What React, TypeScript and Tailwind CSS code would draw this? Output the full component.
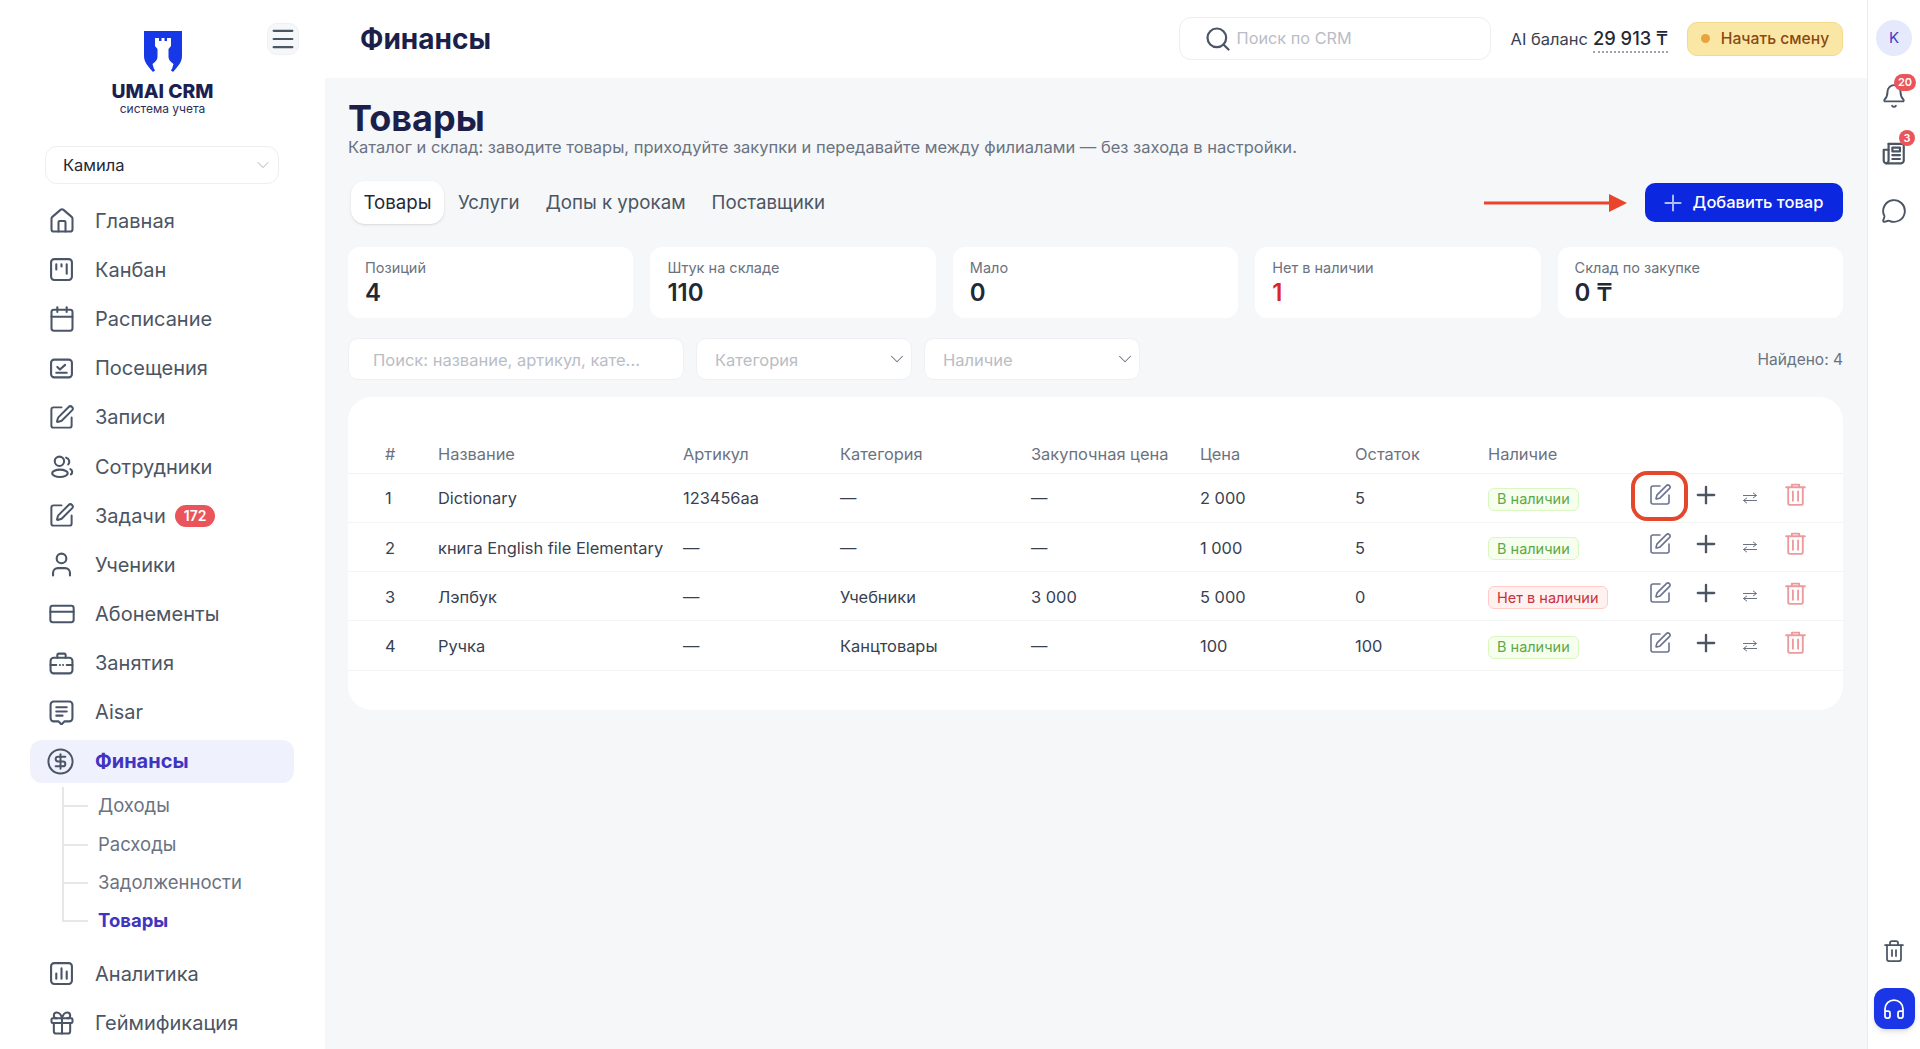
import React from "react";
import {
  House, Calendar, SquarePen, User, CreditCard, CircleDollarSign, Gift, Bell,
  MessageCircle, Trash2, Headphones, Search, ChevronDown, Plus, Menu,
} from "lucide-react";

type IconProps = { className?: string };

function Svg({ className, children }: { className?: string; children: React.ReactNode }) {
  return (
    <svg viewBox="0 0 24 24" fill="none" stroke="currentColor" strokeWidth="2" strokeLinecap="round" strokeLinejoin="round" className={className}>
      {children}
    </svg>
  );
}

const KanbanIcon = ({ className }: IconProps) => (
  <Svg className={className}><rect x="2" y="2" width="20" height="20" rx="3" /><path d="M7 7v5M12 7v2M17 7v9" /></Svg>
);
const VisitIcon = ({ className }: IconProps) => (
  <Svg className={className}><rect x="2" y="3.5" width="20" height="17" rx="3" /><path d="M7 16h10M8 10.5l2.5 2.5 5-4.5" /></Svg>
);
const StaffIcon = ({ className }: IconProps) => (
  <Svg className={className}><circle cx="10" cy="7" r="4.5" /><ellipse cx="10.5" cy="18.5" rx="7.5" ry="3.5" /><path d="M16.5 3.5a4 4 0 0 1 2 6.5M20.5 14.5c2 1 2.5 3.5.5 5" /></Svg>
);
const CaseIcon = ({ className }: IconProps) => (
  <Svg className={className}><rect x="1.5" y="6.5" width="21" height="15" rx="3" /><path d="M8 6.5V4a1.5 1.5 0 0 1 1.5-1.5h5A1.5 1.5 0 0 1 16 4v2.5M1.5 13.5H7M17 13.5h5.5M10.5 13.5h.01M13.5 13.5h.01" /></Svg>
);
const AisarIcon = ({ className }: IconProps) => (
  <Svg className={className}><path d="M4.5 1.5h15a3 3 0 0 1 3 3v13a3 3 0 0 1-3 3h-4.5L12 23.5 9 20.5H4.5a3 3 0 0 1-3-3v-13a3 3 0 0 1 3-3z" /><path d="M7 7h10M7 11h10M7 15h6" /></Svg>
);
const ChartIcon = ({ className }: IconProps) => (
  <Svg className={className}><rect x="2" y="2" width="20" height="20" rx="3" /><path d="M7 12v5M12 7v10M17 10v7" /></Svg>
);
const NewsIcon = ({ className }: IconProps) => (
  <Svg className={className}><path d="M7 3.5h12.5a1.5 1.5 0 0 1 1.5 1.5v14a2.5 2.5 0 0 1-2.5 2.5H5a2.5 2.5 0 0 1-2.5-2.5V9H7" /><path d="M7 3.5V19a2.5 2.5 0 0 1-2.5 2.5" /><rect x="10.5" y="7" width="7" height="3.5" /><path d="M10.5 14h7M10.5 17.5h7" /></Svg>
);
const SwapIcon = ({ className }: IconProps) => (
  <svg viewBox="0 0 16 12" fill="none" stroke="currentColor" strokeWidth="1" className={className}>
    <path d="M1 3.5h13.500M11 .8l3.500 2.700L11 6M15 8.500H1.500M5 5.800L1.500 8.500 5 11.200" />
  </svg>
);
const BinIcon = ({ className }: IconProps) => (
  <svg viewBox="0 0 24 24" fill="none" stroke="currentColor" strokeWidth="1.8" strokeLinecap="round" strokeLinejoin="round" className={className}>
    <path d="M3 5h18M8.500 5V2.500h7V5M5 5v15.500A1.500 1.500 0 0 0 6.500 22h11a1.500 1.500 0 0 0 1.500-1.500V5M9.500 9v9M14.500 9v9" />
  </svg>
);

function Logo() {
  return (
    <svg viewBox="0 0 38 41" className="w-[38px] h-[41px]">
      <path d="M0 0H38V25C38 32 33 36 29 41L24 37H14L9 41C5 36 0 32 0 25Z" fill="#1638e6" />
      <path d="M11 7H15V10H17.500V7H20.500V10H23V7H27V15L24.500 18V26C24.500 29 27 31 29.500 33L28 38L25 41H13L10 38L8.500 33C11 31 13.500 29 13.500 26V18L11 15Z" fill="#ffffff" />
    </svg>
  );
}

const lucide = (I: React.ComponentType<{ className?: string; strokeWidth?: number }>, cls: string) =>
  ({ className }: IconProps) => <I className={`${className ?? ""} ${cls}`} strokeWidth={1.75} />;

const HomeI = lucide(House, "w-[28px] h-[28px]");
const CalI = lucide(Calendar, "w-[28px] h-[28px]");
const PenI = lucide(SquarePen, "w-[27px] h-[27px]");
const UserI = lucide(User, "w-[29px] h-[29px]");
const CardI = lucide(CreditCard, "w-[28px] h-[28px]");
const GiftI = lucide(Gift, "w-[28px] h-[28px]");

const nav = [
  { label: "Главная", icon: HomeI },
  { label: "Канбан", icon: KanbanIcon },
  { label: "Расписание", icon: CalI },
  { label: "Посещения", icon: VisitIcon },
  { label: "Записи", icon: PenI },
  { label: "Сотрудники", icon: StaffIcon },
  { label: "Задачи", icon: PenI, badge: "172" },
  { label: "Ученики", icon: UserI },
  { label: "Абонементы", icon: CardI },
  { label: "Занятия", icon: CaseIcon },
  { label: "Aisar", icon: AisarIcon },
];

const subs = [
  { label: "Доходы" },
  { label: "Расходы" },
  { label: "Задолженности" },
  { label: "Товары", active: true },
];

const stats = [
  { label: "Позиций", value: "4" },
  { label: "Штук на складе", value: "110" },
  { label: "Мало", value: "0" },
  { label: "Нет в наличии", value: "1", red: true },
  { label: "Склад по закупке", value: "0 ₸" },
];

const rows = [
  { n: "1", name: "Dictionary", sku: "123456aa", cat: "—", buy: "—", price: "2 000", left: "5", ok: true },
  { n: "2", name: "книга English file Elementary", sku: "—", cat: "—", buy: "—", price: "1 000", left: "5", ok: true },
  { n: "3", name: "Лэпбук", sku: "—", cat: "Учебники", buy: "3 000", price: "5 000", left: "0", ok: false },
  { n: "4", name: "Ручка", sku: "—", cat: "Канцтовары", buy: "—", price: "100", left: "100", ok: true },
];

function NavRow({ label, icon: Icon, badge }: { label: string; icon: React.ComponentType<IconProps>; badge?: string }) {
  return (
    <a className="flex items-center h-[49.2px] pl-[49px] text-[20px] text-[#4b5563]">
      <span className="w-[25px] h-[25px] shrink-0 flex items-center justify-center">
        <Icon className="w-[25px] h-[25px] text-[#4a5568] shrink-0" />
      </span>
      <span className="ml-[21px]">{label}</span>
      {badge && (
        <span className="ml-[9px] h-[22px] px-[9px] rounded-full bg-[#e9555a] text-white text-[14px] font-semibold flex items-center">{badge}</span>
      )}
    </a>
  );
}

function Sidebar() {
  return (
    <aside className="w-[325px] shrink-0 bg-white flex flex-col">
      <div className="relative h-[146px] flex flex-col items-center pt-[31px] text-center">
        <Logo />
        <div className="mt-[7px] text-[19.300px] leading-[24px] font-extrabold text-[#1c1f52]">UMAI CRM</div>
        <div className="-mt-[1px] text-[12px] leading-[13px] text-[#2c3058]">система учета</div>
        <button className="absolute left-[267px] top-[23px] w-[32px] h-[32px] rounded-[10px] bg-[#f5f7f9] border border-[#eef0f3] flex items-center justify-center">
          <Menu className="w-[28px] h-[28px] shrink-0 text-[#4b5563]" strokeWidth={1.9} />
        </button>
      </div>
      <div className="mx-[45px] w-[234px] h-[38px] shrink-0 rounded-[12px] border border-[#eceef1] flex items-center justify-between pl-[17px] pr-[5px] text-[16.500px] text-[#1f2937]">
        <span className="pt-[1px]">Камила</span>
        <ChevronDown className="w-[20px] h-[20px] text-[#9ca3af]" strokeWidth={1} />
      </div>
      <nav className="mt-[12px] flex flex-col">
        {nav.map((n) => (
          <NavRow key={n.label} label={n.label} icon={n.icon} badge={n.badge} />
        ))}
        <div className="h-[48px] flex items-center">
          <a className="mx-[30px] w-[264px] h-[43px] rounded-[12px] bg-[#eff1fd] flex items-center pl-[18px] text-[20px] font-bold text-[#3f35c0]">
            <span className="w-[25px] h-[25px] flex items-center justify-center">
              <CircleDollarSign className="w-[29px] h-[29px] shrink-0 text-[#4a5568]" strokeWidth={1.6} />
            </span>
            <span className="ml-[22px]">Финансы</span>
          </a>
        </div>
        <div className="ml-[62px] mt-[2px] flex flex-col">
          {subs.map((s, i) => (
            <div key={s.label} className="flex h-[38.3px]">
              <div className="w-[26px] flex flex-col shrink-0">
                <div className="flex-1 border-l-2 border-b-2 border-[#e5e7eb]" />
                <div className={`flex-1 ${i < subs.length - 1 ? "border-l-2 border-[#e5e7eb]" : ""}`} />
              </div>
              <span className={`ml-[10px] self-center text-[18.500px] ${s.active ? "font-bold text-[#3f35c0]" : "text-[#6b7280]"}`}>{s.label}</span>
            </div>
          ))}
        </div>
        <div className="mt-[9px]">
          <NavRow label="Аналитика" icon={ChartIcon} />
          <NavRow label="Геймификация" icon={GiftI} />
        </div>
      </nav>
    </aside>
  );
}

function Header() {
  return (
    <header className="h-[78px] shrink-0 bg-white flex items-center pl-[35px] pr-[24px]">
      <h2 className="text-[28px] font-bold text-[#1c1f4a]">Финансы</h2>
      <div className="ml-auto -mt-[1px] w-[312px] h-[43px] rounded-[12px] border border-[#eceef1] flex items-center pl-[24px]">
        <Search className="w-[28px] h-[28px] text-[#4b5563]" strokeWidth={1.9} />
        <span className="ml-[5px] text-[16.300px] text-[#b9bdc5]">Поиск по CRM</span>
      </div>
      <div className="ml-[20px] flex items-center">
        <span className="text-[16.500px] text-[#374151]">AI баланс</span>
        <span className="ml-[5px] text-[18.300px] font-medium text-[#1f2937] border-b-2 border-dotted border-[#9ca3af] leading-[24px] pb-[1px]">29 913 ₸</span>
      </div>
      <button className="ml-[19px] -mt-[1px] w-[156px] h-[34px] rounded-[10px] bg-[#fbe7a5] border border-[#f3d98a] flex items-center justify-center gap-[11px] text-[15.700px] font-medium text-[#8a4a12]">
        <span className="w-[9px] h-[9px] rounded-full bg-[#e8a33d]" />
        Начать смену
      </button>
    </header>
  );
}

function Arrow() {
  return (
    <svg viewBox="0 0 143 20" className="w-[143px] h-[20px]">
      <path d="M0 10H128" stroke="#e8452c" strokeWidth="3" />
      <path d="M125 1L143 10L125 19Z" fill="#e8452c" />
    </svg>
  );
}

function Actions({ mark }: { mark?: boolean }) {
  return (
    <div className="flex items-center -mt-[8px]">
      <div className="relative w-[24px] h-[24px] flex items-center justify-center">
        <SquarePen className="w-[24px] h-[24px] shrink-0 text-[#6b7391]" strokeWidth={1.6} />
        {mark && <div className="absolute -left-[17px] -top-[12px] w-[57px] h-[50px] rounded-[16px] border-[4px] border-[#e4472b]" />}
      </div>
      <Plus className="ml-[20px] w-[28px] h-[28px] shrink-0 text-[#4b5563]" strokeWidth={2} />
      <SwapIcon className="ml-[22px] mt-[6px] w-[16px] h-[12px] text-[#6b7280]" />
      <BinIcon className="ml-[25px] w-[25px] h-[25px] text-[#ec9a9c]" />
    </div>
  );
}

function ProductTable() {
  const th = "h-[38px] p-0 pt-[2px] text-left font-normal text-[16.400px] text-[#6b7280] border-b border-[#f1f2f4]";
  const td = "h-[49.3px] p-0 pt-[2px] text-[16.400px] text-[#374151] border-b border-[#f3f4f6]";
  return (
    <section className="mt-[17px] h-[313px] rounded-[24px] bg-white pt-[38px]">
      <table className="w-full table-fixed border-collapse">
        <colgroup>
          <col className="w-[90px]" />
          <col className="w-[245px]" />
          <col className="w-[157px]" />
          <col className="w-[191px]" />
          <col className="w-[169px]" />
          <col className="w-[155px]" />
          <col className="w-[133px]" />
          <col className="w-[160px]" />
          <col />
        </colgroup>
        <thead>
          <tr>
            <th className={`${th} pl-[37px]`}>#</th>
            <th className={th}>Название</th>
            <th className={th}>Артикул</th>
            <th className={th}>Категория</th>
            <th className={th}>Закупочная цена</th>
            <th className={th}>Цена</th>
            <th className={th}>Остаток</th>
            <th className={th}>Наличие</th>
            <th className={th} />
          </tr>
        </thead>
        <tbody>
          {rows.map((r, i) => (
            <tr key={r.n}>
              <td className={`${td} pl-[37px]`}>{r.n}</td>
              <td className={`${td} whitespace-nowrap`}>{r.name}</td>
              <td className={td}>{r.sku}</td>
              <td className={td}>{r.cat}</td>
              <td className={td}>{r.buy}</td>
              <td className={td}>{r.price}</td>
              <td className={td}>{r.left}</td>
              <td className={td}>
                <span className={`inline-flex items-center h-[23px] px-[8px] rounded-[6px] border text-[14.500px] ${r.ok ? "bg-[#f6ffed] border-[#d9f7be] text-[#5da84a]" : "bg-[#fff1f0] border-[#ffccc7] text-[#c9323b]"}`}>
                  {r.ok ? "В наличии" : "Нет в наличии"}
                </span>
              </td>
              <td className={td}>
                <Actions mark={i === 0} />
              </td>
            </tr>
          ))}
        </tbody>
      </table>
    </section>
  );
}

function Content() {
  return (
    <main className="flex-1 bg-[#f5f7f9] pt-[20px] pl-[23px] pr-[24px] overflow-hidden">
      <h1 className="text-[36px] leading-[40px] font-bold text-[#1c1f4a]">Товары</h1>
      <p className="-mt-[1px] text-[16.500px] leading-[20px] text-[#6b7280]">Каталог и склад: заводите товары, приходуйте закупки и передавайте между филиалами — без захода в настройки.</p>
      <div className="mt-[24px] h-[43px] flex items-center justify-between">
        <div className="flex items-center pl-[3px] text-[18.700px] text-[#4b5563]">
          <span className="w-[93px] h-[43px] rounded-[14px] bg-white shadow-sm flex items-center justify-center pt-[1px] text-[#1f2937]">Товары</span>
          <span className="ml-[14px] pt-[1px]">Услуги</span>
          <span className="ml-[26px] pt-[1px]">Допы к урокам</span>
          <span className="ml-[26px] pt-[1px]">Поставщики</span>
        </div>
        <div className="flex items-center gap-[18px]">
          <Arrow />
          <button className="w-[198px] h-[39px] rounded-[10px] bg-[#0c27e0] flex items-center justify-center gap-[7px] pr-[5px] text-[16.500px] font-medium text-white">
            <Plus className="w-[26px] h-[26px] text-[#b3bcf7]" strokeWidth={1.8} />
            Добавить товар
          </button>
        </div>
      </div>
      <div className="mt-[23px] grid grid-cols-5 gap-[17px]">
        {stats.map((s) => (
          <div key={s.label} className="h-[71px] rounded-[12px] bg-white pl-[17px] pt-[12px]">
            <div className="text-[14.500px] leading-[18px] text-[#6b7280]">{s.label}</div>
            <div className={`mt-[1px] text-[24px] leading-[30px] font-semibold ${s.red ? "text-[#dc2626]" : "text-[#1f2937]"}`}>{s.value}</div>
          </div>
        ))}
      </div>
      <div className="mt-[20px] h-[42px] flex items-center">
        <div className="w-[336px] h-[42px] rounded-[10px] bg-white border border-[#eef0f3] flex items-center pl-[24px] pt-[2px] text-[16.500px] text-[#b9bdc5]">Поиск: название, артикул, кате...</div>
        <div className="ml-[12px] w-[216px] h-[42px] rounded-[10px] bg-white border border-[#eef0f3] flex items-center justify-between pl-[18px] pr-[3px] text-[16.500px] text-[#b9bdc5]">
          <span className="pt-[2px]">Категория</span>
          <ChevronDown className="w-[22px] h-[22px] text-[#6b7280]" strokeWidth={1.1} />
        </div>
        <div className="ml-[12px] w-[216px] h-[42px] rounded-[10px] bg-white border border-[#eef0f3] flex items-center justify-between pl-[18px] pr-[3px] text-[16.500px] text-[#b9bdc5]">
          <span className="pt-[2px]">Наличие</span>
          <ChevronDown className="w-[22px] h-[22px] text-[#6b7280]" strokeWidth={1.1} />
        </div>
        <span className="ml-auto pt-[2px] text-[15.500px] text-[#6b7280]">Найдено: 4</span>
      </div>
      <ProductTable />
    </main>
  );
}

function Rail() {
  return (
    <aside className="w-[53px] shrink-0 bg-white border-l border-[#e9ebee] flex flex-col items-center pt-[20px] pb-[20px]">
      <div className="w-[36px] h-[36px] rounded-full bg-[#e6e9fb] flex items-center justify-center text-[15px] text-[#4338ca]">K</div>
      <div className="relative mt-[27px]">
        <Bell className="w-[26px] h-[26px] text-[#4b5563]" strokeWidth={1.75} />
        <span className="absolute -top-[9px] -right-[9px] w-[22px] h-[17px] rounded-full bg-[#e9555a] text-white text-[11px] font-semibold flex items-center justify-center">20</span>
      </div>
      <div className="relative mt-[31px]">
        <NewsIcon className="w-[26px] h-[26px] text-[#4b5563]" />
        <span className="absolute -top-[10px] -right-[8px] w-[16px] h-[16px] rounded-full bg-[#e9555a] text-white text-[11px] font-semibold flex items-center justify-center">3</span>
      </div>
      <MessageCircle className="mt-[32px] w-[26px] h-[26px] text-[#4b5563]" strokeWidth={1.75} />
      <Trash2 className="mt-auto w-[24px] h-[24px] text-[#4b5563]" strokeWidth={1.75} />
      <button className="mt-[25px] w-[41px] h-[41px] rounded-[12px] bg-[#1a36e6] shadow-md flex items-center justify-center">
        <Headphones className="w-[24px] h-[24px] text-white" strokeWidth={1.75} />
      </button>
    </aside>
  );
}

export default function App() {
  return (
    <div className="h-screen w-full flex overflow-hidden bg-white font-['Inter',sans-serif]">
      <Sidebar />
      <div className="flex-1 min-w-0 flex flex-col">
        <Header />
        <Content />
      </div>
      <Rail />
    </div>
  );
}
